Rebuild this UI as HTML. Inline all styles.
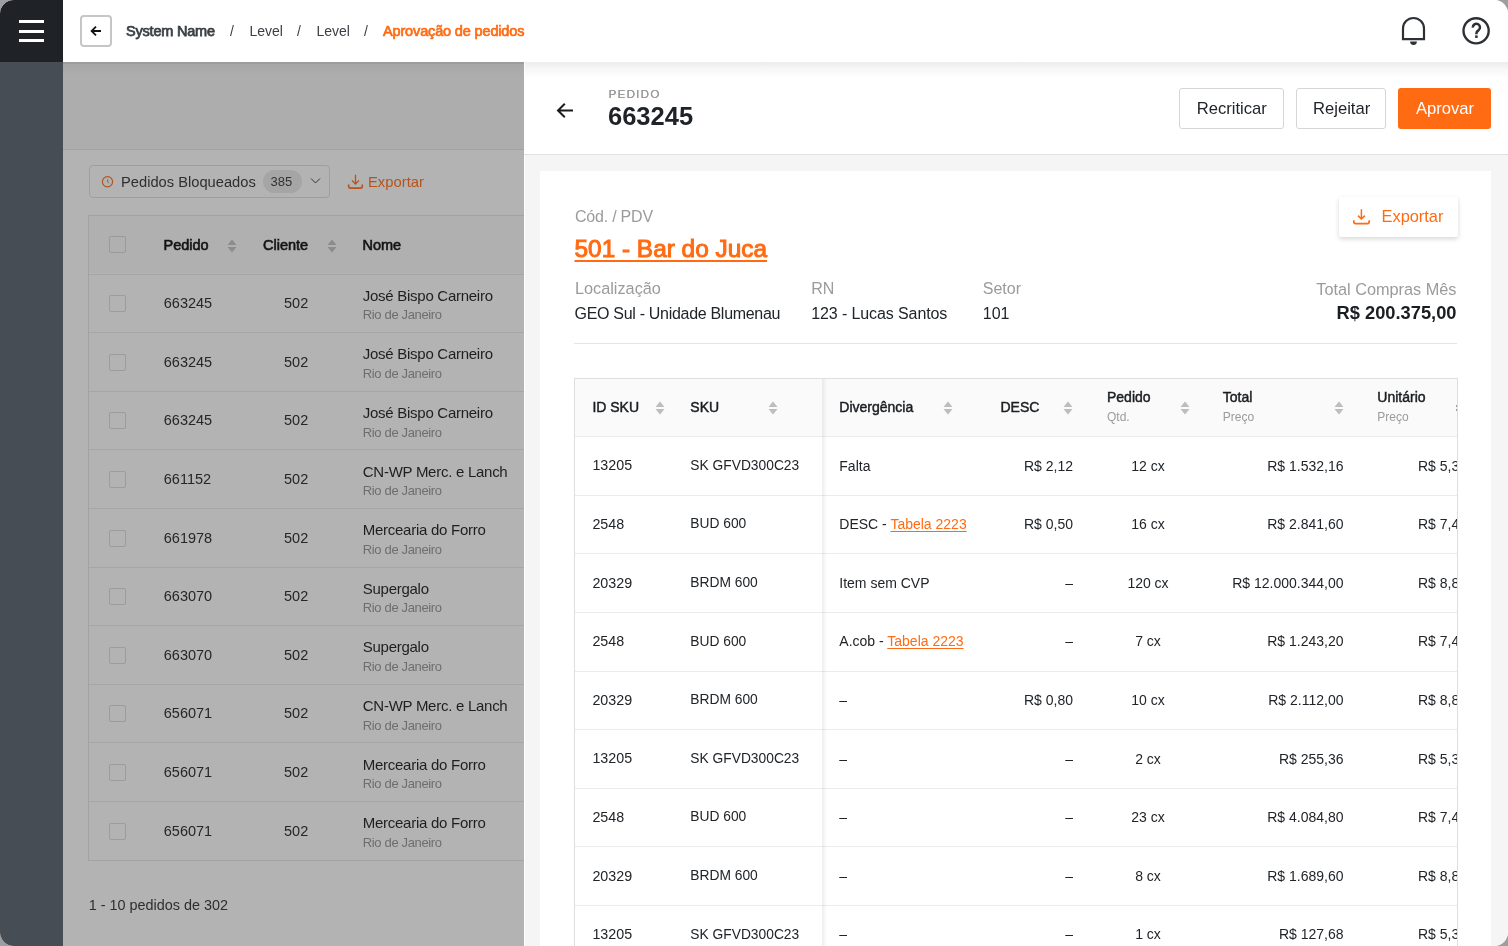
<!DOCTYPE html><html><head><meta charset="utf-8"><title>Aprovação de pedidos</title><style>
*{box-sizing:border-box;margin:0;padding:0}
html,body{width:1508px;height:946px;overflow:hidden;background:#9c9ea1}
body{font-family:"Liberation Sans",sans-serif;color:#212529;position:relative}
.frame{will-change:transform;position:absolute;left:0;top:0;width:1508px;height:946px;border-radius:14px;overflow:hidden;background:#fff}
.a{position:absolute;white-space:nowrap}
.t{position:absolute;white-space:nowrap;line-height:1}
</style></head><body><div class="frame">
<div class="a" style="left:0px;top:62px;width:63px;height:884px;background:#474d55"></div>
<div class="a" style="left:63px;top:62px;width:461px;height:88px;background:#adadad"></div>
<div class="a" style="left:63px;top:62px;width:461px;height:14px;background:linear-gradient(#a6a6a6,#adadad)"></div>
<div class="a" style="left:63px;top:62px;width:461px;height:2px;background:#9d9d9d"></div>
<div class="a" style="left:63px;top:149px;width:461px;height:1px;background:#a2a2a2"></div>
<div class="a" style="left:63px;top:150px;width:461px;height:796px;background:#b3b3b3"></div>
<div class="a" style="left:89px;top:165px;width:241px;height:33px;border:1px solid #9e9e9e;border-radius:4px"></div>
<svg class="a" style="left:101px;top:175px" width="13" height="13" viewBox="0 0 13 13"><circle cx="6.5" cy="6.8" r="5.1" fill="none" stroke="#b5541b" stroke-width="1.2"/><path d="M6.7 4.2V6.9L7.9 8.2" fill="none" stroke="#7a5a48" stroke-width="0.9"/></svg>
<div class="t" style="left:121px;top:175.06px;font-size:14.7px;color:#2f2f2f;font-weight:normal;">Pedidos Bloqueados</div>
<div class="a" style="left:263px;top:170px;width:39px;height:23px;background:#a5a5a5;border-radius:12px"></div>
<div class="t" style="left:270.5px;top:175.0px;font-size:13px;color:#333;font-weight:normal;">385</div>
<svg class="a" style="left:310px;top:177px" width="11" height="8" viewBox="0 0 11 8"><path d="M1 1.5L5.5 6L10 1.5" fill="none" stroke="#333" stroke-width="1"/></svg>
<svg class="a" style="left:347px;top:173px" width="17" height="17" viewBox="0 0 17 17"><path d="M8.5 1.8V11.4M5 7.4L8.5 11L12 7.4" fill="none" stroke="#b8521a" stroke-width="1.3"/><path d="M1.7 11.6V13.6Q1.7 15.1 3.2 15.1H13.8Q15.3 15.1 15.3 13.6V11.6" fill="none" stroke="#b8521a" stroke-width="1.7"/></svg>
<div class="t" style="left:368px;top:174.97px;font-size:14.8px;color:#b5541b;font-weight:normal;">Exportar</div>
<div class="a" style="left:88px;top:215px;width:436px;height:646px;border:1px solid #a3a3a3;border-right:none"></div>
<div class="a" style="left:89px;top:216px;width:435px;height:57px;background:#b0b0b0"></div>
<div class="a" style="left:109px;top:236px;width:17px;height:17px;border:1px solid #9a9a9a;border-radius:2px"></div>
<div class="t" style="left:163.5px;top:237.93px;font-size:14.5px;color:#141414;font-weight:normal;-webkit-text-stroke:0.6px #141414">Pedido</div>
<svg class="a" style="left:227px;top:238.5px" width="10" height="14" viewBox="0 0 10 14"><path d="M5 0.5L9.5 6H0.5Z M5 13.5L9.5 8H0.5Z" fill="#8c8c8c"/></svg>
<div class="t" style="left:263px;top:237.93px;font-size:14.5px;color:#141414;font-weight:normal;-webkit-text-stroke:0.6px #141414">Cliente</div>
<svg class="a" style="left:327px;top:238.5px" width="10" height="14" viewBox="0 0 10 14"><path d="M5 0.5L9.5 6H0.5Z M5 13.5L9.5 8H0.5Z" fill="#8c8c8c"/></svg>
<div class="t" style="left:362.5px;top:237.93px;font-size:14.5px;color:#141414;font-weight:normal;-webkit-text-stroke:0.6px #141414">Nome</div>
<div class="a" style="left:89px;top:273.6px;width:435px;height:1px;background:#a6a6a6"></div>
<div class="a" style="left:109px;top:295.2px;width:17px;height:17px;border:1px solid #9c9c9c;border-radius:2px"></div>
<div class="t" style="left:163.8px;top:296.13px;font-size:14.5px;color:#262626;font-weight:normal;">663245</div>
<div class="t" style="left:284px;top:296.13px;font-size:14.5px;color:#262626;font-weight:normal;">502</div>
<div class="t" style="left:362.8px;top:287.8px;font-size:15px;color:#1f1f1f;font-weight:normal;letter-spacing:-0.27px">José Bispo Carneiro</div>
<div class="t" style="left:362.8px;top:308.3px;font-size:13px;color:#6e6e6e;font-weight:normal;letter-spacing:-0.35px">Rio de Janeiro</div>
<div class="a" style="left:89px;top:332.2px;width:435px;height:1px;background:#a6a6a6"></div>
<div class="a" style="left:109px;top:353.8px;width:17px;height:17px;border:1px solid #9c9c9c;border-radius:2px"></div>
<div class="t" style="left:163.8px;top:354.73px;font-size:14.5px;color:#262626;font-weight:normal;">663245</div>
<div class="t" style="left:284px;top:354.73px;font-size:14.5px;color:#262626;font-weight:normal;">502</div>
<div class="t" style="left:362.8px;top:346.4px;font-size:15px;color:#1f1f1f;font-weight:normal;letter-spacing:-0.27px">José Bispo Carneiro</div>
<div class="t" style="left:362.8px;top:366.9px;font-size:13px;color:#6e6e6e;font-weight:normal;letter-spacing:-0.35px">Rio de Janeiro</div>
<div class="a" style="left:89px;top:390.8px;width:435px;height:1px;background:#a6a6a6"></div>
<div class="a" style="left:109px;top:412.4px;width:17px;height:17px;border:1px solid #9c9c9c;border-radius:2px"></div>
<div class="t" style="left:163.8px;top:413.33px;font-size:14.5px;color:#262626;font-weight:normal;">663245</div>
<div class="t" style="left:284px;top:413.33px;font-size:14.5px;color:#262626;font-weight:normal;">502</div>
<div class="t" style="left:362.8px;top:405.0px;font-size:15px;color:#1f1f1f;font-weight:normal;letter-spacing:-0.27px">José Bispo Carneiro</div>
<div class="t" style="left:362.8px;top:425.5px;font-size:13px;color:#6e6e6e;font-weight:normal;letter-spacing:-0.35px">Rio de Janeiro</div>
<div class="a" style="left:89px;top:449.4px;width:435px;height:1px;background:#a6a6a6"></div>
<div class="a" style="left:109px;top:471.0px;width:17px;height:17px;border:1px solid #9c9c9c;border-radius:2px"></div>
<div class="t" style="left:163.8px;top:471.93px;font-size:14.5px;color:#262626;font-weight:normal;">661152</div>
<div class="t" style="left:284px;top:471.93px;font-size:14.5px;color:#262626;font-weight:normal;">502</div>
<div class="t" style="left:362.8px;top:463.6px;font-size:15px;color:#1f1f1f;font-weight:normal;letter-spacing:-0.27px">CN-WP Merc. e Lanch</div>
<div class="t" style="left:362.8px;top:484.1px;font-size:13px;color:#6e6e6e;font-weight:normal;letter-spacing:-0.35px">Rio de Janeiro</div>
<div class="a" style="left:89px;top:508.0px;width:435px;height:1px;background:#a6a6a6"></div>
<div class="a" style="left:109px;top:529.6px;width:17px;height:17px;border:1px solid #9c9c9c;border-radius:2px"></div>
<div class="t" style="left:163.8px;top:530.53px;font-size:14.5px;color:#262626;font-weight:normal;">661978</div>
<div class="t" style="left:284px;top:530.53px;font-size:14.5px;color:#262626;font-weight:normal;">502</div>
<div class="t" style="left:362.8px;top:522.2px;font-size:15px;color:#1f1f1f;font-weight:normal;letter-spacing:-0.27px">Mercearia do Forro</div>
<div class="t" style="left:362.8px;top:542.7px;font-size:13px;color:#6e6e6e;font-weight:normal;letter-spacing:-0.35px">Rio de Janeiro</div>
<div class="a" style="left:89px;top:566.6px;width:435px;height:1px;background:#a6a6a6"></div>
<div class="a" style="left:109px;top:588.2px;width:17px;height:17px;border:1px solid #9c9c9c;border-radius:2px"></div>
<div class="t" style="left:163.8px;top:589.13px;font-size:14.5px;color:#262626;font-weight:normal;">663070</div>
<div class="t" style="left:284px;top:589.13px;font-size:14.5px;color:#262626;font-weight:normal;">502</div>
<div class="t" style="left:362.8px;top:580.8px;font-size:15px;color:#1f1f1f;font-weight:normal;letter-spacing:-0.27px">Supergalo</div>
<div class="t" style="left:362.8px;top:601.3px;font-size:13px;color:#6e6e6e;font-weight:normal;letter-spacing:-0.35px">Rio de Janeiro</div>
<div class="a" style="left:89px;top:625.2px;width:435px;height:1px;background:#a6a6a6"></div>
<div class="a" style="left:109px;top:646.8px;width:17px;height:17px;border:1px solid #9c9c9c;border-radius:2px"></div>
<div class="t" style="left:163.8px;top:647.73px;font-size:14.5px;color:#262626;font-weight:normal;">663070</div>
<div class="t" style="left:284px;top:647.73px;font-size:14.5px;color:#262626;font-weight:normal;">502</div>
<div class="t" style="left:362.8px;top:639.4px;font-size:15px;color:#1f1f1f;font-weight:normal;letter-spacing:-0.27px">Supergalo</div>
<div class="t" style="left:362.8px;top:659.9px;font-size:13px;color:#6e6e6e;font-weight:normal;letter-spacing:-0.35px">Rio de Janeiro</div>
<div class="a" style="left:89px;top:683.8px;width:435px;height:1px;background:#a6a6a6"></div>
<div class="a" style="left:109px;top:705.4px;width:17px;height:17px;border:1px solid #9c9c9c;border-radius:2px"></div>
<div class="t" style="left:163.8px;top:706.33px;font-size:14.5px;color:#262626;font-weight:normal;">656071</div>
<div class="t" style="left:284px;top:706.33px;font-size:14.5px;color:#262626;font-weight:normal;">502</div>
<div class="t" style="left:362.8px;top:698.0px;font-size:15px;color:#1f1f1f;font-weight:normal;letter-spacing:-0.27px">CN-WP Merc. e Lanch</div>
<div class="t" style="left:362.8px;top:718.5px;font-size:13px;color:#6e6e6e;font-weight:normal;letter-spacing:-0.35px">Rio de Janeiro</div>
<div class="a" style="left:89px;top:742.4px;width:435px;height:1px;background:#a6a6a6"></div>
<div class="a" style="left:109px;top:764.0px;width:17px;height:17px;border:1px solid #9c9c9c;border-radius:2px"></div>
<div class="t" style="left:163.8px;top:764.93px;font-size:14.5px;color:#262626;font-weight:normal;">656071</div>
<div class="t" style="left:284px;top:764.93px;font-size:14.5px;color:#262626;font-weight:normal;">502</div>
<div class="t" style="left:362.8px;top:756.6px;font-size:15px;color:#1f1f1f;font-weight:normal;letter-spacing:-0.27px">Mercearia do Forro</div>
<div class="t" style="left:362.8px;top:777.1px;font-size:13px;color:#6e6e6e;font-weight:normal;letter-spacing:-0.35px">Rio de Janeiro</div>
<div class="a" style="left:89px;top:801.0px;width:435px;height:1px;background:#a6a6a6"></div>
<div class="a" style="left:109px;top:822.6px;width:17px;height:17px;border:1px solid #9c9c9c;border-radius:2px"></div>
<div class="t" style="left:163.8px;top:823.53px;font-size:14.5px;color:#262626;font-weight:normal;">656071</div>
<div class="t" style="left:284px;top:823.53px;font-size:14.5px;color:#262626;font-weight:normal;">502</div>
<div class="t" style="left:362.8px;top:815.2px;font-size:15px;color:#1f1f1f;font-weight:normal;letter-spacing:-0.27px">Mercearia do Forro</div>
<div class="t" style="left:362.8px;top:835.7px;font-size:13px;color:#6e6e6e;font-weight:normal;letter-spacing:-0.35px">Rio de Janeiro</div>
<div class="t" style="left:88.8px;top:897.61px;font-size:14.4px;color:#2e2e2e;font-weight:normal;">1 - 10 pedidos de 302</div>
<div class="a" style="left:0px;top:0px;width:1508px;height:62px;background:#fff"></div>
<div class="a" style="left:0px;top:0px;width:63px;height:62px;background:#1f2327"></div>
<div class="a" style="left:19px;top:20px;width:25px;height:3px;background:#fff"></div>
<div class="a" style="left:19px;top:30px;width:25px;height:3px;background:#fff"></div>
<div class="a" style="left:19px;top:39.4px;width:25px;height:3px;background:#fff"></div>
<div class="a" style="left:80px;top:15px;width:32px;height:32px;border:2px solid #c6c6c6;border-radius:4px"></div>
<svg class="a" style="left:90px;top:25px" width="12" height="12" viewBox="0 0 12 12"><path d="M11 6H1.8M6 1.6L1.6 6L6 10.4" fill="none" stroke="#111" stroke-width="1.8"/></svg>
<div class="t" style="left:126px;top:23.53px;font-size:14.5px;color:#3b3f44;font-weight:normal;-webkit-text-stroke:0.75px #3b3f44;letter-spacing:-0.2px">System Name</div>
<div class="t" style="left:230px;top:23.75px;font-size:14px;color:#3b3f44;font-weight:normal;">/</div>
<div class="t" style="left:249.5px;top:23.75px;font-size:14px;color:#3b3f44;font-weight:normal;">Level</div>
<div class="t" style="left:297px;top:23.75px;font-size:14px;color:#3b3f44;font-weight:normal;">/</div>
<div class="t" style="left:316.5px;top:23.75px;font-size:14px;color:#3b3f44;font-weight:normal;">Level</div>
<div class="t" style="left:364px;top:23.75px;font-size:14px;color:#3b3f44;font-weight:normal;">/</div>
<div class="t" style="left:383px;top:23.53px;font-size:14.5px;color:#ff6b12;font-weight:normal;-webkit-text-stroke:0.7px #ff6b12;letter-spacing:-0.15px">Aprovação de pedidos</div>
<svg class="a" style="left:1398px;top:14px" width="30" height="34" viewBox="0 0 30 34"><path d="M5 25.2V14.5A10.5 10.5 0 0 1 26 14.5V25.2Z" fill="none" stroke="#2d3136" stroke-width="2.2" stroke-linejoin="miter"/><path d="M12.1 27.6H18.9A3.4 3.4 0 0 1 12.1 27.6Z" fill="#2d3136"/></svg>
<svg class="a" style="left:1460px;top:15px" width="32" height="32" viewBox="0 0 32 32"><circle cx="16.1" cy="15.8" r="12.6" fill="none" stroke="#2d3136" stroke-width="2.4"/><path d="M12.8 12.6A3.6 3.6 0 1 1 18.4 15.4C17 16.3 16.4 17 16.4 18.4V19.3" fill="none" stroke="#2d3136" stroke-width="2.5"/><rect x="15.1" y="20.4" width="2.6" height="2.5" fill="#2d3136"/></svg>
<div class="a" style="left:524px;top:62px;width:984px;height:884px;background:#f5f5f5;border-left:1px solid #fff"></div>
<div class="a" style="left:524px;top:62px;width:984px;height:92px;background:#fff"></div>
<div class="a" style="left:525px;top:62px;width:983px;height:16px;background:linear-gradient(#ececec,#f6f6f6 40%,#fff)"></div>
<div class="a" style="left:524px;top:154px;width:984px;height:1px;background:#e2e2e2"></div>
<svg class="a" style="left:556px;top:102px" width="18" height="17" viewBox="0 0 18 17"><path d="M17 8.5H2.5M8.8 1.8L2 8.5L8.8 15.2" fill="none" stroke="#1b1b1b" stroke-width="2"/></svg>
<div class="t" style="left:608.5px;top:88.18px;font-size:11.6px;color:#999;font-weight:normal;letter-spacing:1.25px;text-shadow:0.2px 0 0 #999">PEDIDO</div>
<div class="t" style="left:608px;top:103.71px;font-size:25.5px;color:#1f2327;font-weight:bold;">663245</div>
<div class="a" style="left:1179px;top:88px;width:105px;height:41px;background:#fff;border:1px solid #d6d6d6;border-radius:3px"></div>
<div class="a" style="left:1296px;top:88px;width:90px;height:41px;background:#fff;border:1px solid #d6d6d6;border-radius:3px"></div>
<div class="a" style="left:1398px;top:88px;width:93px;height:41px;background:#ff6b12;border-radius:3px"></div>
<div class="t" style="left:1196.7px;top:101.15px;font-size:16.6px;color:#212529;font-weight:normal;">Recriticar</div>
<div class="t" style="left:1313px;top:101.15px;font-size:16.6px;color:#212529;font-weight:normal;">Rejeitar</div>
<div class="t" style="left:1416px;top:101.15px;font-size:16.6px;color:#fff;font-weight:normal;">Aprovar</div>
<div class="a" style="left:540px;top:171px;width:951px;height:775px;background:#fff"></div>
<div class="t" style="left:574.9px;top:209.46px;font-size:16px;color:#9b9b9b;font-weight:normal;letter-spacing:-0.2px">Cód. / PDV</div>
<div class="t" style="left:574.5px;top:236.55px;font-size:24.4px;color:#ff6b12;font-weight:normal;-webkit-text-stroke:1px #ff6b12;text-decoration:underline;text-decoration-thickness:1.6px;text-underline-offset:2.5px">501 - Bar do Juca</div>
<div class="a" style="left:1339px;top:197px;width:119px;height:40px;background:#fff;box-shadow:0 2px 5px rgba(0,0,0,0.16);border-radius:2px"></div>
<svg class="a" style="left:1352px;top:208px" width="19" height="18" viewBox="0 0 19 18"><path d="M9.4 1.2V11.2M6 7.6L9.4 11L12.8 7.6" fill="none" stroke="#ff6b12" stroke-width="1.5"/><path d="M1.8 12.2V13.8Q1.8 15.6 3.6 15.6H15.4Q17.2 15.6 17.2 13.8V12.2" fill="none" stroke="#ff6b12" stroke-width="1.7"/></svg>
<div class="t" style="left:1381.5px;top:208.22px;font-size:16.4px;color:#ff6b12;font-weight:normal;">Exportar</div>
<div class="t" style="left:574.9px;top:280.4px;font-size:16.3px;color:#9b9b9b;font-weight:normal;">Localização</div>
<div class="t" style="left:574.5px;top:305.66px;font-size:16px;color:#212529;font-weight:normal;letter-spacing:-0.3px">GEO Sul - Unidade Blumenau</div>
<div class="t" style="left:811.2px;top:280.86px;font-size:16px;color:#9b9b9b;font-weight:normal;">RN</div>
<div class="t" style="left:811.2px;top:305.86px;font-size:16px;color:#212529;font-weight:normal;letter-spacing:-0.1px">123 - Lucas Santos</div>
<div class="t" style="left:982.8px;top:280.86px;font-size:16px;color:#9b9b9b;font-weight:normal;">Setor</div>
<div class="t" style="left:982.8px;top:305.86px;font-size:16px;color:#212529;font-weight:normal;">101</div>
<div class="t" style="right:51.5px;top:280.7px;font-size:16.3px;color:#9b9b9b;font-weight:normal;">Total Compras Mês</div>
<div class="t" style="right:51.5px;top:304.41px;font-size:18.3px;color:#1a1d21;font-weight:bold;">R$ 200.375,00</div>
<div class="a" style="left:574px;top:343px;width:883px;height:1px;background:#e6e6e6"></div>
<div class="a" style="left:574px;top:378px;width:884px;height:600px;border:1px solid #dedede;border-right:1px solid #dedede;border-bottom:none"></div>
<div class="a" style="left:575px;top:379px;width:882px;height:57px;background:#fafafa"></div>
<div class="t" style="left:592.4px;top:400.35px;font-size:14px;color:#1a1d21;font-weight:normal;-webkit-text-stroke:0.45px #1a1d21">ID SKU</div>
<svg class="a" style="left:655px;top:401px" width="10" height="14" viewBox="0 0 10 14"><path d="M5 0.5L9.5 6H0.5Z M5 13.5L9.5 8H0.5Z" fill="#bdbdbd"/></svg>
<div class="t" style="left:690.3px;top:400.35px;font-size:14px;color:#1a1d21;font-weight:normal;-webkit-text-stroke:0.45px #1a1d21">SKU</div>
<svg class="a" style="left:768px;top:401px" width="10" height="14" viewBox="0 0 10 14"><path d="M5 0.5L9.5 6H0.5Z M5 13.5L9.5 8H0.5Z" fill="#bdbdbd"/></svg>
<div class="t" style="left:839.3px;top:400.35px;font-size:14px;color:#1a1d21;font-weight:normal;-webkit-text-stroke:0.45px #1a1d21">Divergência</div>
<svg class="a" style="left:943px;top:401px" width="10" height="14" viewBox="0 0 10 14"><path d="M5 0.5L9.5 6H0.5Z M5 13.5L9.5 8H0.5Z" fill="#bdbdbd"/></svg>
<div class="t" style="left:1000.5px;top:400.35px;font-size:14px;color:#1a1d21;font-weight:normal;-webkit-text-stroke:0.45px #1a1d21">DESC</div>
<svg class="a" style="left:1063px;top:401px" width="10" height="14" viewBox="0 0 10 14"><path d="M5 0.5L9.5 6H0.5Z M5 13.5L9.5 8H0.5Z" fill="#bdbdbd"/></svg>
<div class="t" style="left:1107px;top:390.45px;font-size:14px;color:#1a1d21;font-weight:normal;-webkit-text-stroke:0.45px #1a1d21">Pedido</div>
<div class="t" style="left:1107px;top:411.34px;font-size:12px;color:#9b9b9b;font-weight:normal;">Qtd.</div>
<svg class="a" style="left:1180px;top:401px" width="10" height="14" viewBox="0 0 10 14"><path d="M5 0.5L9.5 6H0.5Z M5 13.5L9.5 8H0.5Z" fill="#bdbdbd"/></svg>
<div class="t" style="left:1222.8px;top:390.45px;font-size:14px;color:#1a1d21;font-weight:normal;-webkit-text-stroke:0.45px #1a1d21">Total</div>
<div class="t" style="left:1222.8px;top:411.34px;font-size:12px;color:#9b9b9b;font-weight:normal;">Preço</div>
<svg class="a" style="left:1334px;top:401px" width="10" height="14" viewBox="0 0 10 14"><path d="M5 0.5L9.5 6H0.5Z M5 13.5L9.5 8H0.5Z" fill="#bdbdbd"/></svg>
<div class="t" style="left:1377.3px;top:390.45px;font-size:14px;color:#1a1d21;font-weight:normal;-webkit-text-stroke:0.45px #1a1d21">Unitário</div>
<div class="t" style="left:1377.3px;top:411.34px;font-size:12px;color:#9b9b9b;font-weight:normal;">Preço</div>
<div class="a" style="left:575px;top:436.2px;width:882px;height:1px;background:#ebebeb"></div>
<div class="t" style="left:592.4px;top:458.4px;font-size:14.3px;color:#212529;font-weight:normal;">13205</div>
<div class="t" style="left:690.3px;top:458.82px;font-size:13.8px;color:#212529;font-weight:normal;">SK GFVD300C23</div>
<div class="t" style="left:839.3px;top:458.65px;font-size:14px;color:#212529;font-weight:normal;">Falta</div>
<div class="t" style="right:435px;top:458.65px;font-size:14px;color:#212529;font-weight:normal;">R$ 2,12</div>
<div class="t" style="left:948px;width:400px;text-align:center;top:458.65px;font-size:14px;color:#212529;font-weight:normal;">12 cx</div>
<div class="t" style="right:164.5px;top:458.65px;font-size:14px;color:#212529;font-weight:normal;">R$ 1.532,16</div>
<div class="t" style="left:1418px;top:458.65px;font-size:14px;color:#212529;width:39px;overflow:hidden">R$ 5,3</div>
<div class="a" style="left:575px;top:494.8px;width:882px;height:1px;background:#ebebeb"></div>
<div class="t" style="left:592.4px;top:517.0px;font-size:14.3px;color:#212529;font-weight:normal;">2548</div>
<div class="t" style="left:690.3px;top:517.42px;font-size:13.8px;color:#212529;font-weight:normal;">BUD 600</div>
<div class="t" style="left:839.3px;top:517.25px;font-size:14px;color:#212529;font-weight:normal;">DESC - <span style="color:#ff6b12;text-decoration:underline;text-underline-offset:2px">Tabela 2223</span></div>
<div class="t" style="right:435px;top:517.25px;font-size:14px;color:#212529;font-weight:normal;">R$ 0,50</div>
<div class="t" style="left:948px;width:400px;text-align:center;top:517.25px;font-size:14px;color:#212529;font-weight:normal;">16 cx</div>
<div class="t" style="right:164.5px;top:517.25px;font-size:14px;color:#212529;font-weight:normal;">R$ 2.841,60</div>
<div class="t" style="left:1418px;top:517.25px;font-size:14px;color:#212529;width:39px;overflow:hidden">R$ 7,4</div>
<div class="a" style="left:575px;top:553.4px;width:882px;height:1px;background:#ebebeb"></div>
<div class="t" style="left:592.4px;top:575.6px;font-size:14.3px;color:#212529;font-weight:normal;">20329</div>
<div class="t" style="left:690.3px;top:576.02px;font-size:13.8px;color:#212529;font-weight:normal;">BRDM 600</div>
<div class="t" style="left:839.3px;top:575.85px;font-size:14px;color:#212529;font-weight:normal;">Item sem CVP</div>
<div class="t" style="right:435px;top:575.85px;font-size:14px;color:#212529;font-weight:normal;">–</div>
<div class="t" style="left:948px;width:400px;text-align:center;top:575.85px;font-size:14px;color:#212529;font-weight:normal;">120 cx</div>
<div class="t" style="right:164.5px;top:575.85px;font-size:14px;color:#212529;font-weight:normal;">R$ 12.000.344,00</div>
<div class="t" style="left:1418px;top:575.85px;font-size:14px;color:#212529;width:39px;overflow:hidden">R$ 8,8</div>
<div class="a" style="left:575px;top:612.0px;width:882px;height:1px;background:#ebebeb"></div>
<div class="t" style="left:592.4px;top:634.2px;font-size:14.3px;color:#212529;font-weight:normal;">2548</div>
<div class="t" style="left:690.3px;top:634.62px;font-size:13.8px;color:#212529;font-weight:normal;">BUD 600</div>
<div class="t" style="left:839.3px;top:634.45px;font-size:14px;color:#212529;font-weight:normal;">A.cob - <span style="color:#ff6b12;text-decoration:underline;text-underline-offset:2px">Tabela 2223</span></div>
<div class="t" style="right:435px;top:634.45px;font-size:14px;color:#212529;font-weight:normal;">–</div>
<div class="t" style="left:948px;width:400px;text-align:center;top:634.45px;font-size:14px;color:#212529;font-weight:normal;">7 cx</div>
<div class="t" style="right:164.5px;top:634.45px;font-size:14px;color:#212529;font-weight:normal;">R$ 1.243,20</div>
<div class="t" style="left:1418px;top:634.45px;font-size:14px;color:#212529;width:39px;overflow:hidden">R$ 7,4</div>
<div class="a" style="left:575px;top:670.6px;width:882px;height:1px;background:#ebebeb"></div>
<div class="t" style="left:592.4px;top:692.8px;font-size:14.3px;color:#212529;font-weight:normal;">20329</div>
<div class="t" style="left:690.3px;top:693.22px;font-size:13.8px;color:#212529;font-weight:normal;">BRDM 600</div>
<div class="t" style="left:839.3px;top:693.05px;font-size:14px;color:#212529;font-weight:normal;">–</div>
<div class="t" style="right:435px;top:693.05px;font-size:14px;color:#212529;font-weight:normal;">R$ 0,80</div>
<div class="t" style="left:948px;width:400px;text-align:center;top:693.05px;font-size:14px;color:#212529;font-weight:normal;">10 cx</div>
<div class="t" style="right:164.5px;top:693.05px;font-size:14px;color:#212529;font-weight:normal;">R$ 2.112,00</div>
<div class="t" style="left:1418px;top:693.05px;font-size:14px;color:#212529;width:39px;overflow:hidden">R$ 8,8</div>
<div class="a" style="left:575px;top:729.2px;width:882px;height:1px;background:#ebebeb"></div>
<div class="t" style="left:592.4px;top:751.4px;font-size:14.3px;color:#212529;font-weight:normal;">13205</div>
<div class="t" style="left:690.3px;top:751.82px;font-size:13.8px;color:#212529;font-weight:normal;">SK GFVD300C23</div>
<div class="t" style="left:839.3px;top:751.65px;font-size:14px;color:#212529;font-weight:normal;">–</div>
<div class="t" style="right:435px;top:751.65px;font-size:14px;color:#212529;font-weight:normal;">–</div>
<div class="t" style="left:948px;width:400px;text-align:center;top:751.65px;font-size:14px;color:#212529;font-weight:normal;">2 cx</div>
<div class="t" style="right:164.5px;top:751.65px;font-size:14px;color:#212529;font-weight:normal;">R$ 255,36</div>
<div class="t" style="left:1418px;top:751.65px;font-size:14px;color:#212529;width:39px;overflow:hidden">R$ 5,3</div>
<div class="a" style="left:575px;top:787.8px;width:882px;height:1px;background:#ebebeb"></div>
<div class="t" style="left:592.4px;top:810.0px;font-size:14.3px;color:#212529;font-weight:normal;">2548</div>
<div class="t" style="left:690.3px;top:810.42px;font-size:13.8px;color:#212529;font-weight:normal;">BUD 600</div>
<div class="t" style="left:839.3px;top:810.25px;font-size:14px;color:#212529;font-weight:normal;">–</div>
<div class="t" style="right:435px;top:810.25px;font-size:14px;color:#212529;font-weight:normal;">–</div>
<div class="t" style="left:948px;width:400px;text-align:center;top:810.25px;font-size:14px;color:#212529;font-weight:normal;">23 cx</div>
<div class="t" style="right:164.5px;top:810.25px;font-size:14px;color:#212529;font-weight:normal;">R$ 4.084,80</div>
<div class="t" style="left:1418px;top:810.25px;font-size:14px;color:#212529;width:39px;overflow:hidden">R$ 7,4</div>
<div class="a" style="left:575px;top:846.4px;width:882px;height:1px;background:#ebebeb"></div>
<div class="t" style="left:592.4px;top:868.6px;font-size:14.3px;color:#212529;font-weight:normal;">20329</div>
<div class="t" style="left:690.3px;top:869.02px;font-size:13.8px;color:#212529;font-weight:normal;">BRDM 600</div>
<div class="t" style="left:839.3px;top:868.85px;font-size:14px;color:#212529;font-weight:normal;">–</div>
<div class="t" style="right:435px;top:868.85px;font-size:14px;color:#212529;font-weight:normal;">–</div>
<div class="t" style="left:948px;width:400px;text-align:center;top:868.85px;font-size:14px;color:#212529;font-weight:normal;">8 cx</div>
<div class="t" style="right:164.5px;top:868.85px;font-size:14px;color:#212529;font-weight:normal;">R$ 1.689,60</div>
<div class="t" style="left:1418px;top:868.85px;font-size:14px;color:#212529;width:39px;overflow:hidden">R$ 8,8</div>
<div class="a" style="left:575px;top:905.0px;width:882px;height:1px;background:#ebebeb"></div>
<div class="t" style="left:592.4px;top:927.2px;font-size:14.3px;color:#212529;font-weight:normal;">13205</div>
<div class="t" style="left:690.3px;top:927.62px;font-size:13.8px;color:#212529;font-weight:normal;">SK GFVD300C23</div>
<div class="t" style="left:839.3px;top:927.45px;font-size:14px;color:#212529;font-weight:normal;">–</div>
<div class="t" style="right:435px;top:927.45px;font-size:14px;color:#212529;font-weight:normal;">–</div>
<div class="t" style="left:948px;width:400px;text-align:center;top:927.45px;font-size:14px;color:#212529;font-weight:normal;">1 cx</div>
<div class="t" style="right:164.5px;top:927.45px;font-size:14px;color:#212529;font-weight:normal;">R$ 127,68</div>
<div class="t" style="left:1418px;top:927.45px;font-size:14px;color:#212529;width:39px;overflow:hidden">R$ 5,3</div>
<div class="a" style="left:822px;top:379px;width:5px;height:600px;background:linear-gradient(90deg,rgba(0,0,0,0.065),rgba(0,0,0,0.03) 50%,rgba(0,0,0,0))"></div>
<div class="a" style="left:1456px;top:405px;width:1px;height:1.5px;background:#999"></div>
<div class="a" style="left:1456px;top:409px;width:1px;height:1.5px;background:#999"></div>
<div class="a" style="left:1457px;top:378px;width:1px;height:600px;background:#dedede"></div>
</div></body></html>
